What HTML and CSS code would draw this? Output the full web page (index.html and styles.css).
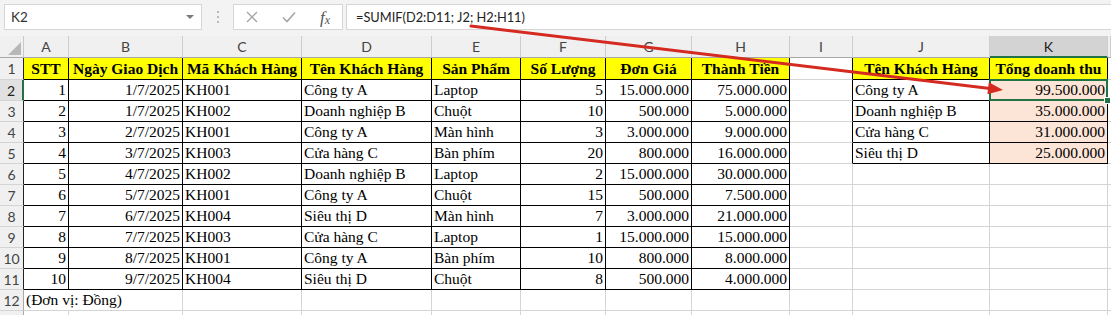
FILE: index.html
```html
<!DOCTYPE html>
<html lang="vi">
<head>
<meta charset="utf-8">
<title>SUMIF</title>
<link rel="stylesheet" href="styles.css">
</head>
<body>
<div class="app">
  <div class="fbar">
    <div class="namebox"><span>K2</span><span class="dd"></span></div>
    <div class="dots"><i></i><i></i><i></i></div>
    <div class="btns">
      <svg class="ico" width="12" height="12" viewBox="0 0 12 12"><path d="M1 1L11 11M11 1L1 11" stroke="#a6a6a6" stroke-width="1.4" fill="none"/></svg>
      <svg class="ico" width="14" height="12" viewBox="0 0 14 12"><path d="M1 6.5L5 10.5L13 1.5" stroke="#a6a6a6" stroke-width="1.6" fill="none"/></svg>
      <span class="fx"><i>f</i><i class="x">x</i></span>
    </div>
    <div class="formula">=SUMIF(D2:D11; J2; H2:H11)</div>
  </div>

  <div class="sheet">
    <div class="row hrow">
      <div class="corner"><span class="tri"></span></div>
      <div class="ch">A</div><div class="ch">B</div><div class="ch">C</div><div class="ch">D</div><div class="ch">E</div><div class="ch">F</div><div class="ch">G</div><div class="ch">H</div><div class="ch">I</div><div class="ch">J</div><div class="ch sel">K</div><div class="ch"></div>
    </div>

    <div class="row r1">
      <div class="rh t">1</div>
      <div class="c t hd">STT</div><div class="c t hd">Ngày Giao Dịch</div><div class="c t hd">Mã Khách Hàng</div><div class="c t hd">Tên Khách Hàng</div><div class="c t hd">Sản Phẩm</div><div class="c t hd">Số Lượng</div><div class="c t hd">Đơn Giá</div><div class="c t hd">Thành Tiền</div>
      <div class="c tr"></div><div class="c t hd">Tên Khách Hàng</div><div class="c t hd">Tổng doanh thu</div><div class="c"></div>
    </div>

    <div class="row">
      <div class="rh t rsel">2</div>
      <div class="c t rt">1</div><div class="c t rt">1/7/2025</div><div class="c t">KH001</div><div class="c t">Công ty A</div><div class="c t">Laptop</div><div class="c t rt">5</div><div class="c t rt">15.000.000</div><div class="c t rt">75.000.000</div>
      <div class="c tr"></div><div class="c t">Công ty A</div><div class="c t rt pk selcell">99.500.000<span class="selbox"></span><span class="handle"></span></div><div class="c"></div>
    </div>

    <div class="row">
      <div class="rh t">3</div>
      <div class="c t rt">2</div><div class="c t rt">1/7/2025</div><div class="c t">KH002</div><div class="c t">Doanh nghiệp B</div><div class="c t">Chuột</div><div class="c t rt">10</div><div class="c t rt">500.000</div><div class="c t rt">5.000.000</div>
      <div class="c tr"></div><div class="c t">Doanh nghiệp B</div><div class="c t rt pk">35.000.000</div><div class="c"></div>
    </div>

    <div class="row">
      <div class="rh t">4</div>
      <div class="c t rt">3</div><div class="c t rt">2/7/2025</div><div class="c t">KH001</div><div class="c t">Công ty A</div><div class="c t">Màn hình</div><div class="c t rt">3</div><div class="c t rt">3.000.000</div><div class="c t rt">9.000.000</div>
      <div class="c tr"></div><div class="c t">Cửa hàng C</div><div class="c t rt pk">31.000.000</div><div class="c"></div>
    </div>

    <div class="row">
      <div class="rh t">5</div>
      <div class="c t rt">4</div><div class="c t rt">3/7/2025</div><div class="c t">KH003</div><div class="c t">Cửa hàng C</div><div class="c t">Bàn phím</div><div class="c t rt">20</div><div class="c t rt">800.000</div><div class="c t rt">16.000.000</div>
      <div class="c tr"></div><div class="c t">Siêu thị D</div><div class="c t rt pk">25.000.000</div><div class="c"></div>
    </div>

    <div class="row">
      <div class="rh t">6</div>
      <div class="c t rt">5</div><div class="c t rt">4/7/2025</div><div class="c t">KH002</div><div class="c t">Doanh nghiệp B</div><div class="c t">Laptop</div><div class="c t rt">2</div><div class="c t rt">15.000.000</div><div class="c t rt">30.000.000</div>
      <div class="c"></div><div class="c"></div><div class="c"></div><div class="c"></div>
    </div>

    <div class="row">
      <div class="rh t">7</div>
      <div class="c t rt">6</div><div class="c t rt">5/7/2025</div><div class="c t">KH001</div><div class="c t">Công ty A</div><div class="c t">Chuột</div><div class="c t rt">15</div><div class="c t rt">500.000</div><div class="c t rt">7.500.000</div>
      <div class="c"></div><div class="c"></div><div class="c"></div><div class="c"></div>
    </div>

    <div class="row">
      <div class="rh t">8</div>
      <div class="c t rt">7</div><div class="c t rt">6/7/2025</div><div class="c t">KH004</div><div class="c t">Siêu thị D</div><div class="c t">Màn hình</div><div class="c t rt">7</div><div class="c t rt">3.000.000</div><div class="c t rt">21.000.000</div>
      <div class="c"></div><div class="c"></div><div class="c"></div><div class="c"></div>
    </div>

    <div class="row">
      <div class="rh t">9</div>
      <div class="c t rt">8</div><div class="c t rt">7/7/2025</div><div class="c t">KH003</div><div class="c t">Cửa hàng C</div><div class="c t">Laptop</div><div class="c t rt">1</div><div class="c t rt">15.000.000</div><div class="c t rt">15.000.000</div>
      <div class="c"></div><div class="c"></div><div class="c"></div><div class="c"></div>
    </div>

    <div class="row">
      <div class="rh t">10</div>
      <div class="c t rt">9</div><div class="c t rt">8/7/2025</div><div class="c t">KH001</div><div class="c t">Công ty A</div><div class="c t">Bàn phím</div><div class="c t rt">10</div><div class="c t rt">800.000</div><div class="c t rt">8.000.000</div>
      <div class="c"></div><div class="c"></div><div class="c"></div><div class="c"></div>
    </div>

    <div class="row">
      <div class="rh t">11</div>
      <div class="c t rt">10</div><div class="c t rt">9/7/2025</div><div class="c t">KH004</div><div class="c t">Siêu thị D</div><div class="c t">Chuột</div><div class="c t rt">8</div><div class="c t rt">500.000</div><div class="c t rt">4.000.000</div>
      <div class="c"></div><div class="c"></div><div class="c"></div><div class="c"></div>
    </div>

    <div class="row">
      <div class="rh">12</div>
      <div class="c span2">(Đơn vị: Đồng)</div><div class="c"></div><div class="c"></div><div class="c"></div><div class="c"></div><div class="c"></div><div class="c"></div><div class="c"></div><div class="c"></div><div class="c"></div><div class="c"></div>
    </div>

    <div class="row">
      <div class="rh"></div>
      <div class="c"></div><div class="c"></div><div class="c"></div><div class="c"></div><div class="c"></div><div class="c"></div><div class="c"></div><div class="c"></div><div class="c"></div><div class="c"></div><div class="c"></div><div class="c"></div>
    </div>
  </div>

  <svg class="arrow" width="1111" height="315" viewBox="0 0 1111 315">
    <line x1="471" y1="26" x2="990" y2="88.5" stroke="#d42a20" stroke-width="3" stroke-linecap="round"/>
    <polygon points="1003,90 988.8,82.3 987.4,94.3" fill="#d42a20"/>
  </svg>
</div>
</body>
</html>
```

FILE: styles.css
```css
html, body {
  margin: 0;
  padding: 0;
  background: #ffffff;
  overflow: hidden;
}

.app {
  position: relative;
  width: 1111px;
  height: 315px;
  overflow: hidden;
}

/* formula bar */
.fbar {
  display: flex;
  align-items: center;
  height: 36px;
  padding: 0 0 2px 4px;
  box-sizing: border-box;
  background: #f3f3f3;
  font-family: Lato, "Open Sans", sans-serif;
}

.namebox {
  width: 198px;
  height: 26px;
  box-sizing: border-box;
  background: #fff;
  border: 1px solid #d6d6d6;
  display: flex;
  align-items: center;
  justify-content: space-between;
  padding: 0 7px 0 6px;
  font-size: 13.5px;
  color: #333;
}

.dd {
  width: 0;
  height: 0;
  border-left: 4px solid transparent;
  border-right: 4px solid transparent;
  border-top: 4px solid #7a7a7a;
}

.dots {
  width: 31px;
  display: flex;
  flex-direction: column;
  align-items: center;
  gap: 3px;
}

.dots i {
  width: 2px;
  height: 2px;
  background: #b9b9b9;
}

.btns {
  width: 110px;
  height: 26px;
  box-sizing: border-box;
  background: #fff;
  border: 1px solid #d6d6d6;
  display: flex;
  align-items: center;
  padding: 0 12px 0 12px;
  justify-content: space-between;
}

.fx {
  font-family: "Liberation Serif", serif;
  color: #555;
  font-size: 17px;
  line-height: 1;
}

.fx .x {
  font-size: 12px;
  position: relative;
  top: 1px;
}

.formula {
  flex: 1;
  margin-left: 3px;
  height: 26px;
  box-sizing: border-box;
  background: #fff;
  border: 1px solid #d6d6d6;
  border-right: none;
  display: flex;
  align-items: center;
  padding-left: 9px;
  font-size: 12.8px;
  color: #222;
}

/* sheet */
.sheet {
  display: flex;
  flex-direction: column;
}

.row {
  display: grid;
  grid-template-columns: 24px 45px 114px 119px 130px 89px 85px 86px 98px 63px 137px 118px 1fr;
  height: 21px;
}

.row.hrow {
  height: 22px;
}

.row.r1 {
  height: 22px;
}

.corner {
  position: relative;
  background: #f0f0f0;
  border-right: 1px solid #c9c9c9;
  border-bottom: 1px solid #a8a8a8;
  box-sizing: border-box;
}

.tri {
  position: absolute;
  right: 2px;
  bottom: 2px;
  width: 0;
  height: 0;
  border-left: 13px solid transparent;
  border-bottom: 13px solid #b8b8b8;
}

.ch {
  box-sizing: border-box;
  background: #f0f0f0;
  border-right: 1px solid #cdcdcd;
  border-bottom: 1px solid #a8a8a8;
  display: flex;
  align-items: center;
  justify-content: center;
  font-family: Lato, "Open Sans", sans-serif;
  font-size: 14px;
  color: #444;
}

.ch.sel {
  background: #d3d3d3;
  color: #222;
  border-bottom: 2px solid #217346;
}

.rh {
  box-sizing: border-box;
  background: #f0f0f0;
  border-right: 1px solid #a8a8a8;
  border-bottom: 1px solid #d4d4d4;
  display: flex;
  align-items: center;
  justify-content: center;
  font-family: Lato, "Open Sans", sans-serif;
  font-size: 14px;
  color: #444;
}

.rh.t {
  border-right-color: #222;
}

.rh.rsel {
  background: #e1e1e1;
  border-right: 2px solid #217346;
  color: #222;
}

.c {
  box-sizing: border-box;
  border-right: 1px solid #d4d4d4;
  border-bottom: 1px solid #d4d4d4;
  display: flex;
  align-items: flex-end;
  padding: 0 2px 1px 2px;
  white-space: nowrap;
  overflow: hidden;
  font-family: "Liberation Serif", "Times New Roman", serif;
  font-size: 15.5px;
  line-height: 18px;
  color: #000;
}

.c.t {
  border-right-color: #000;
  border-bottom-color: #000;
}

.c.tr {
  border-right-color: #000;
}

.c.rt {
  justify-content: flex-end;
  padding-right: 2px;
}

.c.hd {
  background: #ffff00;
  font-weight: bold;
  justify-content: center;
  padding: 0 1px 1px 1px;
}

.c.pk {
  background: #fce4d6;
}

.c.span2 {
  grid-column: span 2;
}

.selcell {
  position: relative;
  overflow: visible;
}

.selbox {
  position: absolute;
  left: -1px;
  top: -1px;
  right: -1px;
  bottom: -1px;
  border: 2px solid #217346;
}

.handle {
  position: absolute;
  right: -4px;
  bottom: -4px;
  width: 5px;
  height: 5px;
  background: #217346;
  border: 1px solid #fff;
}

.arrow {
  position: absolute;
  left: 0;
  top: 0;
  pointer-events: none;
}
```
